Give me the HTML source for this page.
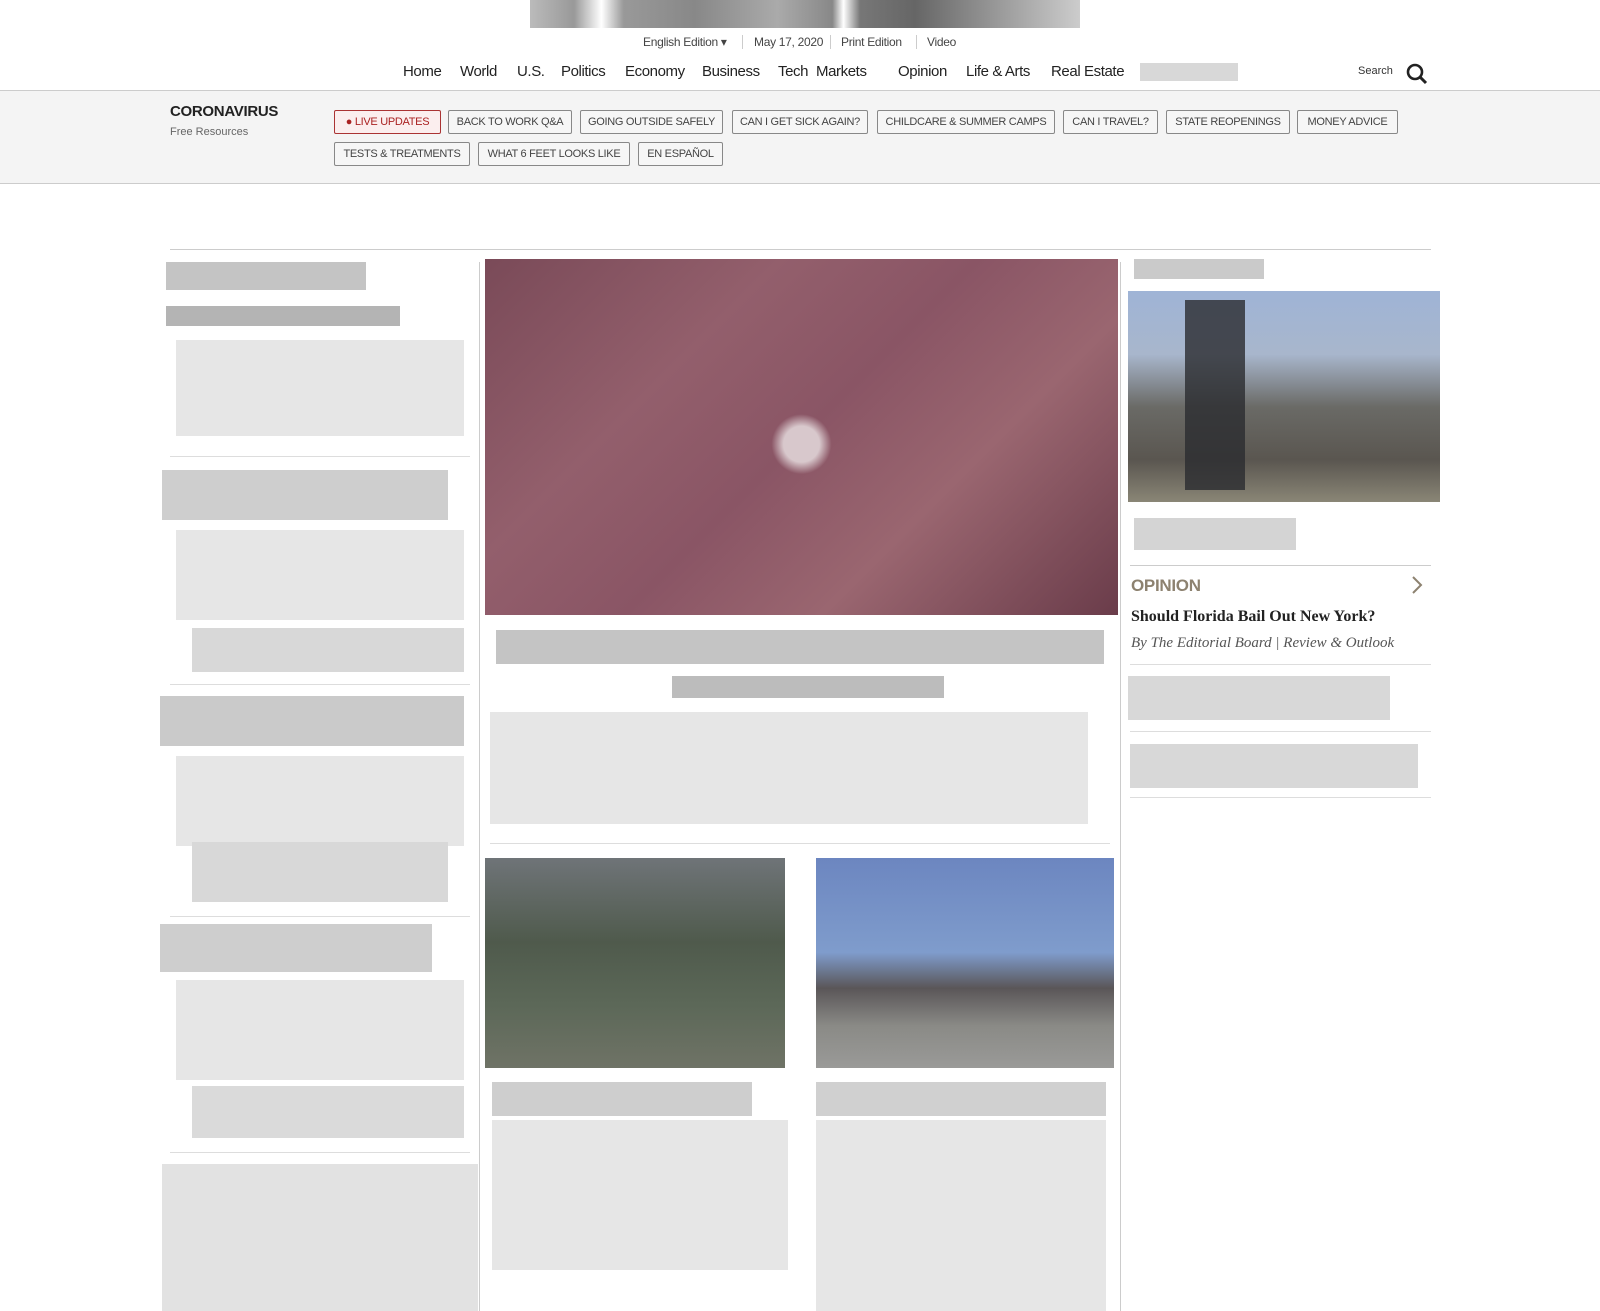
<!DOCTYPE html>
<html><head><meta charset="utf-8"><style>
*{margin:0;padding:0;box-sizing:border-box}
body{width:1600px;height:1311px;background:#fff;position:relative;overflow:hidden;font-family:"Liberation Sans",sans-serif;color:#333}
.a{position:absolute;white-space:nowrap}
.bl{position:absolute;background:#e6e6e6}
.nav{font-size:15px;color:#222;top:63px;letter-spacing:-0.4px}
.ed{font-size:12px;color:#444;top:35px;letter-spacing:-0.3px}
.sep{position:absolute;top:35px;width:1px;height:14px;background:#ccc}
.btn{position:absolute;height:24px;border:1px solid #888;border-radius:2px;font-size:11px;color:#444;text-align:center;line-height:22px;background:#f6f6f6;white-space:nowrap;letter-spacing:-0.3px;overflow:hidden}
</style></head><body>
<div class="bl" style="left:530px;top:0;width:550px;height:28px;background:linear-gradient(90deg,#bbb,#999 8%,#fff 13%,#999 17%,#888 30%,#aaa 45%,#888 55%,#fff 57%,#777 60%,#666 70%,#999 85%,#ccc)"></div>
<div class="a ed" style="left:643px">English Edition ▾</div><div class="sep" style="left:742px"></div>
<div class="a ed" style="left:754px">May 17, 2020</div><div class="sep" style="left:830px"></div>
<div class="a ed" style="left:841px">Print Edition</div><div class="sep" style="left:916px"></div>
<div class="a ed" style="left:927px">Video</div>
<div class="a nav" style="left:403px">Home</div>
<div class="a nav" style="left:460px">World</div>
<div class="a nav" style="left:517px">U.S.</div>
<div class="a nav" style="left:561px">Politics</div>
<div class="a nav" style="left:625px">Economy</div>
<div class="a nav" style="left:702px">Business</div>
<div class="a nav" style="left:778px">Tech</div>
<div class="a nav" style="left:816px">Markets</div>
<div class="a nav" style="left:898px">Opinion</div>
<div class="a nav" style="left:966px">Life &amp; Arts</div>
<div class="a nav" style="left:1051px">Real Estate</div>
<div class="bl" style="left:1140px;top:63px;width:98px;height:18px;background:#d8d8d8"></div>
<div class="a" style="left:1358px;top:65px;font-size:11px;color:#333">Search</div>
<svg class="a" style="left:1405px;top:62px" width="24" height="24" viewBox="0 0 24 24"><circle cx="10" cy="10" r="7" fill="none" stroke="#222" stroke-width="2.6"/><path d="M15 15l6 6" stroke="#222" stroke-width="3"/></svg>
<div class="a" style="left:0;top:90px;width:1600px;height:94px;background:#f4f4f4;border-top:1px solid #ccc;border-bottom:1px solid #ccc"></div>
<div class="a" style="left:170px;top:103px;font-size:15px;font-weight:bold;color:#222;letter-spacing:-0.3px">CORONAVIRUS</div>
<div class="a" style="left:170px;top:126px;font-size:11px;color:#666">Free Resources</div>
<div class="btn" style="left:334px;top:110px;width:107px;border-color:#a33;color:#a22;background:#fbeeee">● LIVE UPDATES</div>
<div class="btn" style="left:448px;top:110px;width:124px">BACK TO WORK Q&amp;A</div>
<div class="btn" style="left:580px;top:110px;width:143px">GOING OUTSIDE SAFELY</div>
<div class="btn" style="left:732px;top:110px;width:136px">CAN I GET SICK AGAIN?</div>
<div class="btn" style="left:877px;top:110px;width:178px">CHILDCARE &amp; SUMMER CAMPS</div>
<div class="btn" style="left:1063px;top:110px;width:95px">CAN I TRAVEL?</div>
<div class="btn" style="left:1166px;top:110px;width:124px">STATE REOPENINGS</div>
<div class="btn" style="left:1297px;top:110px;width:101px">MONEY ADVICE</div>
<div class="btn" style="left:334px;top:142px;width:136px">TESTS &amp; TREATMENTS</div>
<div class="btn" style="left:478px;top:142px;width:152px">WHAT 6 FEET LOOKS LIKE</div>
<div class="btn" style="left:638px;top:142px;width:85px">EN ESPAÑOL</div>
<div class="a" style="left:170px;top:249px;width:1261px;height:1px;background:#ccc"></div>
<div class="a" style="left:479px;top:262px;width:1px;height:1049px;background:#ccc"></div>
<div class="a" style="left:1120px;top:262px;width:1px;height:1049px;background:#ccc"></div>
<div class="bl" style="left:166px;top:262px;width:200px;height:28px;background:#c4c4c4"></div>
<div class="bl" style="left:166px;top:306px;width:234px;height:20px;background:#b4b4b4"></div>
<div class="bl" style="left:176px;top:340px;width:288px;height:96px"></div>
<div class="a" style="left:170px;top:456px;width:300px;height:1px;background:#ddd"></div>
<div class="bl" style="left:162px;top:470px;width:286px;height:50px;background:#cecece"></div>
<div class="bl" style="left:176px;top:530px;width:288px;height:90px"></div>
<div class="bl" style="left:192px;top:628px;width:272px;height:44px;background:#d8d8d8"></div>
<div class="a" style="left:170px;top:684px;width:300px;height:1px;background:#ddd"></div>
<div class="bl" style="left:160px;top:696px;width:304px;height:50px;background:#cacaca"></div>
<div class="bl" style="left:176px;top:756px;width:288px;height:90px"></div>
<div class="bl" style="left:192px;top:842px;width:256px;height:60px;background:#d8d8d8"></div>
<div class="a" style="left:170px;top:916px;width:300px;height:1px;background:#ddd"></div>
<div class="bl" style="left:160px;top:924px;width:272px;height:48px;background:#cecece"></div>
<div class="bl" style="left:176px;top:980px;width:288px;height:100px"></div>
<div class="bl" style="left:192px;top:1086px;width:272px;height:52px;background:#dadada"></div>
<div class="a" style="left:170px;top:1152px;width:300px;height:1px;background:#ddd"></div>
<div class="bl" style="left:162px;top:1164px;width:316px;height:147px;background:#e2e2e2"></div>
<div class="a" style="left:485px;top:259px;width:633px;height:356px;background:radial-gradient(circle at 50% 52%,#d8c8cc 0 18px,transparent 30px),linear-gradient(135deg,#7a4a58,#935f6c 30%,#8a5565 50%,#9a6670 70%,#6a3c4a)"></div>
<div class="bl" style="left:496px;top:630px;width:608px;height:34px;background:#c4c4c4"></div>
<div class="bl" style="left:672px;top:676px;width:272px;height:22px;background:#bcbcbc"></div>
<div class="bl" style="left:490px;top:712px;width:598px;height:112px"></div>
<div class="a" style="left:490px;top:843px;width:620px;height:1px;background:#ddd"></div>
<div class="a" style="left:485px;top:858px;width:300px;height:210px;background:linear-gradient(180deg,#6f7478,#4f5a4c 40%,#5c6858 70%,#6f7366)"></div>
<div class="a" style="left:816px;top:858px;width:298px;height:210px;background:linear-gradient(180deg,#6c86c0,#7f9ccc 45%,#5a5658 62%,#8a8a86 80%,#9a9a98)"></div>
<div class="bl" style="left:492px;top:1082px;width:260px;height:34px;background:#cecece"></div>
<div class="bl" style="left:492px;top:1120px;width:296px;height:150px"></div>
<div class="bl" style="left:816px;top:1082px;width:290px;height:34px;background:#d0d0d0"></div>
<div class="bl" style="left:816px;top:1120px;width:290px;height:191px"></div>
<div class="bl" style="left:1134px;top:259px;width:130px;height:20px;background:#cacaca"></div>
<div class="a" style="left:1128px;top:291px;width:312px;height:211px;background:linear-gradient(180deg,#9fb4d6,#a8b6cc 30%,#6a6a66 55%,#5a5650 80%,#8a8676)"></div>
<div class="a" style="left:1185px;top:300px;width:60px;height:190px;background:#2a2c30;opacity:.8"></div>
<div class="bl" style="left:1134px;top:518px;width:162px;height:32px;background:#d4d4d4"></div>
<div class="a" style="left:1130px;top:565px;width:301px;height:1px;background:#ccc"></div>
<div class="a" style="left:1131px;top:576px;font-size:17px;font-weight:bold;color:#8d8270;letter-spacing:-0.3px">OPINION</div>
<svg class="a" style="left:1410px;top:575px" width="14" height="20" viewBox="0 0 14 20"><path d="M3 2l8 8-8 8" fill="none" stroke="#8d8270" stroke-width="2"/></svg>
<div class="a" style="left:1131px;top:608px;font-family:'Liberation Serif',serif;font-size:16px;font-weight:bold;color:#222">Should Florida Bail Out New York?</div>
<div class="a" style="left:1131px;top:635px;font-family:'Liberation Serif',serif;font-size:15px;font-style:italic;color:#555">By The Editorial Board | Review &amp; Outlook</div>
<div class="a" style="left:1130px;top:664px;width:301px;height:1px;background:#ddd"></div>
<div class="bl" style="left:1128px;top:676px;width:262px;height:44px;background:#d8d8d8"></div>
<div class="a" style="left:1130px;top:731px;width:301px;height:1px;background:#ddd"></div>
<div class="bl" style="left:1130px;top:744px;width:288px;height:44px;background:#d8d8d8"></div>
<div class="a" style="left:1130px;top:797px;width:301px;height:1px;background:#ddd"></div>
</body></html>
